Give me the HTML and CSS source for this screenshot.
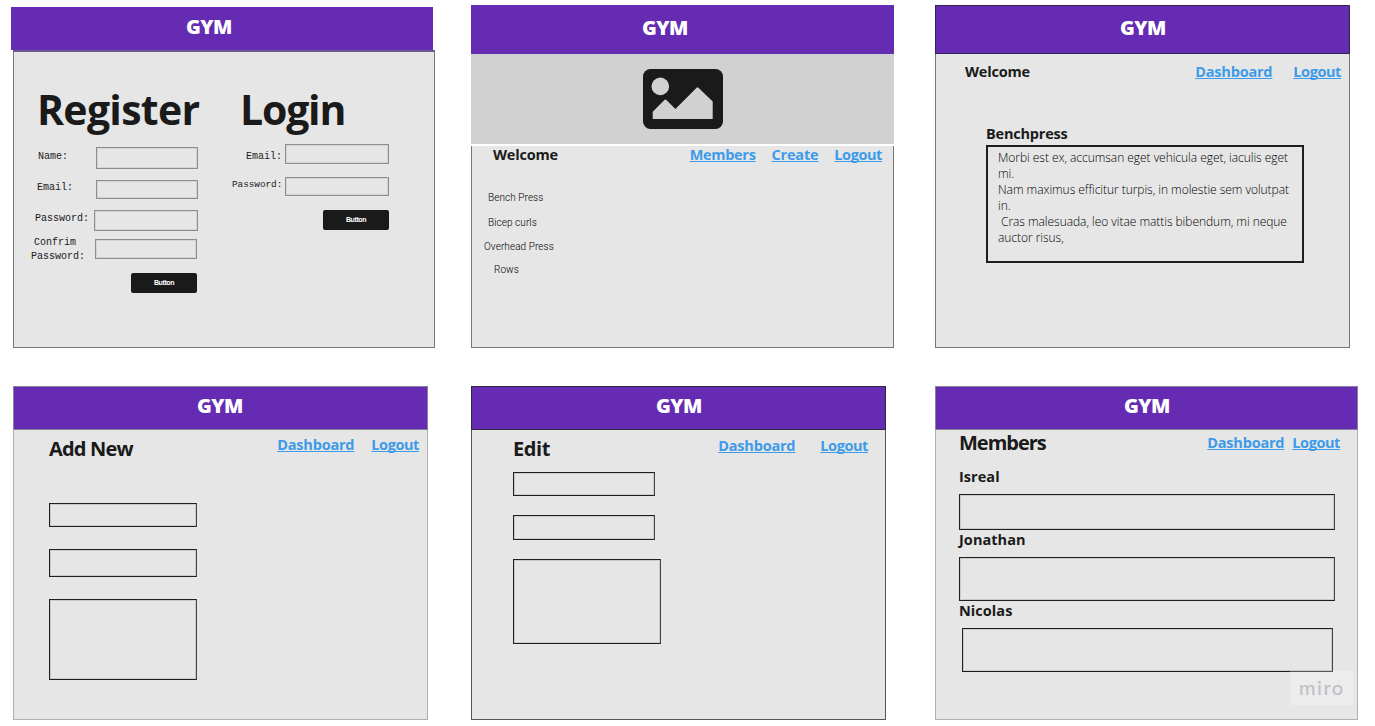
FILE: index.html
```
<!DOCTYPE html>
<html lang="en">
<head>
<meta charset="utf-8">
<title>GYM wireframes</title>
<link rel="stylesheet" href="styles.css">
</head>
<body>
<main class="board">
  <section class="frame frame-auth">
    <header class="bar">GYM</header>
    <div class="screen">
      <form class="signup">
        <h1 class="display display-register"><span>Register</span></h1>
        <div class="field field-name"><label>Name:</label><i class="input"></i></div>
        <div class="field field-email"><label>Email:</label><i class="input"></i></div>
        <div class="field field-pass"><label>Password:</label><i class="input"></i></div>
        <div class="field field-confirm"><label>Confrim<br>Password:</label><i class="input"></i></div>
        <button class="btn" type="button">Button</button>
      </form>
      <form class="login">
        <h1 class="display display-login"><span>Login</span></h1>
        <div class="field field-user"><label>Email:</label><i class="input"></i></div>
        <div class="field field-key"><label class="small">Password:</label><i class="input"></i></div>
        <button class="btn" type="button">Button</button>
      </form>
    </div>
  </section>

  <section class="frame frame-home">
    <header class="bar">GYM</header>
    <div class="hero">
      <svg class="picture" viewBox="0 0 80 60" width="80" height="60">
        <rect width="80" height="60" rx="7.5" fill="#1a1a1a"/>
        <circle cx="17.3" cy="17.4" r="8.8" fill="#d1d1d1"/>
        <path d="M9.7 42.7 21.4 31Q22.4 30 23.4 31L32.4 40 53.4 18.9Q54.5 17.8 55.7 18.9L69.7 32.4V50H9.7Z" fill="#d1d1d1"/>
      </svg>
    </div>
    <div class="screen">
      <nav class="nav"><span class="label">Welcome</span><a class="push members">Members</a><a class="create">Create</a><a class="logout">Logout</a></nav>
      <ul class="lifts">
        <li class="bench">Bench Press</li>
        <li class="curls">Bicep curls</li>
        <li class="overhead">Overhead Press</li>
        <li class="rows">Rows</li>
      </ul>
    </div>
  </section>

  <section class="frame frame-detail">
    <header class="bar">GYM</header>
    <div class="screen">
      <nav class="nav"><span class="label">Welcome</span><a class="push">Dashboard</a><a class="logout">Logout</a></nav>
      <article class="lift">
        <h2 class="label">Benchpress</h2>
        <div class="note">
          <p>Morbi est ex, accumsan eget vehicula eget, iaculis eget</p>
          <p>mi.</p>
          <p>Nam maximus efficitur turpis, in molestie sem volutpat</p>
          <p>in.</p>
          <p class="indent">Cras malesuada, leo vitae mattis bibendum, mi neque</p>
          <p>auctor risus,</p>
        </div>
      </article>
    </div>
  </section>

  <section class="frame frame-add">
    <header class="bar">GYM</header>
    <div class="screen">
      <nav class="nav"><h2 class="title">Add New</h2><a class="push">Dashboard</a><a class="logout">Logout</a></nav>
      <div class="boxes"><i class="box b1"></i><i class="box b2"></i><i class="box b3"></i></div>
    </div>
  </section>

  <section class="frame frame-edit">
    <header class="bar">GYM</header>
    <div class="screen">
      <nav class="nav"><h2 class="title">Edit</h2><a class="push">Dashboard</a><a class="logout">Logout</a></nav>
      <div class="boxes"><i class="box b1"></i><i class="box b2"></i><i class="box b3"></i></div>
    </div>
  </section>

  <section class="frame frame-members">
    <header class="bar">GYM</header>
    <div class="screen">
      <nav class="nav"><h2 class="title">Members</h2><a class="push">Dashboard</a><a class="logout">Logout</a></nav>
      <div class="people">
        <h3 class="label">Isreal</h3><i class="box b1"></i>
        <h3 class="label">Jonathan</h3><i class="box b2"></i>
        <h3 class="label">Nicolas</h3><i class="box b3"></i>
      </div>
      <div class="brand">miro</div>
    </div>
  </section>
</main>
</body>
</html>
```
FILE: styles.css
```
* { box-sizing: border-box; }
body { margin: 0; background: #fff; color: #1a1a1a; font-family: "Open Sans", "Noto Sans", sans-serif; }
h1, h2, h3, p, ul { margin: 0; padding: 0; list-style: none; }
i { display: block; flex: none; }

.board {
  display: grid;
  grid-template-columns: 460px 464px 424px;
  grid-template-rows: 381px 335px;
  padding: 5px 0 0 11px;
  width: 1375px;
  height: 726px;
  overflow: hidden;
}
.frame { display: flex; flex-direction: column; }
.bar {
  flex: none;
  background: #662bb3;
  color: #fff;
  font-size: 20px;
  font-weight: 800;
  letter-spacing: -0.6px;
  white-space: nowrap;
}
.screen { flex: 1; background: #e6e6e6; border: 1px solid #777; border-top: 0; position: relative; }

.nav { display: flex; align-items: flex-start; }
.nav a {
  font-size: 14.5px;
  line-height: 20px;
  font-weight: 700;
  letter-spacing: -0.2px;
  color: #3d9be9;
  text-decoration: underline;
  text-decoration-thickness: 1px;
  text-underline-offset: 1px;
  text-decoration-skip-ink: none;
  white-space: nowrap;
}
.nav .logout { letter-spacing: -0.42px; }
.nav .members { letter-spacing: -0.32px; }
.nav .push { margin-left: auto; }
.label { font-size: 14.5px; line-height: 20px; font-weight: 700; letter-spacing: -0.2px; white-space: nowrap; }
.title { font-size: 20px; line-height: 27px; font-weight: 700; letter-spacing: -0.8px; white-space: nowrap; }
.box { border: 1px solid #1f1f1f; border-right-color: #444; box-shadow: inset 0 0 0 1px rgba(0, 0, 0, 0.12); }

/* Register and login */
.frame-auth { width: 424px; height: 341px; margin-top: 2px; }
.frame-auth .bar { width: 422px; height: 43px; padding-left: 175px; line-height: 40px; }
.frame-auth .screen { margin-left: 2px; display: flex; border-top: 2px solid #6d5590; }
.signup { width: 183px; padding-top: 28px; flex: none; }
.login { margin-left: 35px; width: 157px; padding-top: 28px; flex: none; }
.display { font-size: 41px; line-height: 58px; font-weight: 700; letter-spacing: -0.7px; white-space: nowrap; height: 56px; }
.display-register { padding-left: 23px; }
.display-login { padding-left: 8px; letter-spacing: -1.2px; }
.field { display: flex; align-items: center; }
.field label { flex: none; font-family: "Liberation Mono", monospace; font-size: 10px; line-height: 14px; white-space: nowrap; }
.field .small { font-size: 9.3px; }
.input { border: 1px solid #8d8d8d; height: 100%; box-shadow: inset 0 0 0 1px rgba(0, 0, 0, 0.08); }
.field-name { height: 22px; margin-top: 11px; }
.field-name label { width: 82px; padding: 0 0 2px 24px; }
.field-name .input, .field-email .input { width: 102px; }
.field-email { height: 19px; margin-top: 11px; }
.field-email label { width: 82px; padding: 0 0 3px 23px; }
.field-pass { height: 21px; margin-top: 11px; }
.field-pass label { width: 80px; padding: 0 0 3px 21px; }
.field-pass .input { width: 104px; }
.field-confirm { height: 20px; margin-top: 8px; }
.field-confirm label { width: 81px; padding: 2px 0 0 17px; text-indent: 3px; }
.field-confirm .input { width: 102px; }
.field-user { height: 20px; margin-top: 8px; }
.field-user label { width: 53px; padding: 6px 0 0 14px; }
.field-user .input, .field-key .input { width: 104px; }
.field-key { height: 19px; margin-top: 13px; }
.field-key label { width: 53px; padding-bottom: 3px; }
.btn {
  display: block;
  width: 66px;
  height: 20px;
  margin: 14px 0 0 auto;
  padding: 0;
  border: 0;
  border-radius: 2px;
  background: #1a1a1a;
  color: #fff;
  font: 700 7px/20px "Liberation Sans", sans-serif;
  letter-spacing: -0.4px;
}

/* Home */
.frame-home { width: 423px; height: 343px; }
.frame-home .bar { height: 49px; padding-left: 171px; line-height: 46px; }
.hero { flex: none; height: 92px; padding: 15px 0 0 172px; background: #d1d1d1; border-bottom: 2px solid #fff; }
.picture { display: block; }
.frame-home .nav { padding: 0 11px 0 21px; gap: 16px; }
.frame-home .nav .label, .frame-home .nav a { line-height: 18px; }
.lifts { font: 300 10px/14px Roboto, sans-serif; color: #000; letter-spacing: 0.07px; padding-top: 27px; }
.lifts .bench { padding-left: 16px; }
.lifts .curls { padding-left: 16px; margin-top: 11px; }
.lifts .overhead { padding-left: 12px; margin-top: 10px; }
.lifts .rows { padding-left: 22px; margin-top: 9px; }

/* Exercise detail */
.frame-detail { width: 415px; height: 343px; }
.frame-detail .bar { height: 49px; padding-left: 184px; line-height: 44px; border: 1px solid #35234f; }
.frame-detail .nav { padding: 8px 8px 0 29px; gap: 21px; }
.lift { padding: 42px 0 0 50px; }
.note { width: 318px; height: 118px; margin-top: 1px; padding: 3px 0 0 10px; border: 2px solid #1f1f1f; color: #000; font-size: 12px; line-height: 16px; font-weight: 300; letter-spacing: -0.04px; white-space: nowrap; }
.indent { padding-left: 3px; }

/* Add, edit, members */
.frame-add { width: 415px; height: 334px; margin-left: 2px; }
.frame-add .bar, .frame-edit .bar, .frame-members .bar { height: 44px; line-height: 38px; border: 1px solid #8a7f9c; }
.frame-add .bar { padding-left: 183px; }
.frame-add .screen { border-color: #b0b0b0; }
.frame-add .nav { padding: 5px 8px 0 35px; gap: 17px; }
.boxes { display: flex; flex-direction: column; }
.frame-add .boxes { padding: 41px 0 0 35px; }
.frame-add .box { width: 148px; }
.frame-add .b1 { height: 24px; }
.frame-add .b2 { height: 28px; margin-top: 22px; }
.frame-add .b3 { height: 81px; margin-top: 22px; }

.frame-edit { width: 415px; height: 334px; }
.frame-edit .bar { padding-left: 184px; }
.frame-edit .bar { border-color: #33263f; }
.frame-edit .screen { border-color: #555; }
.frame-edit .nav { padding: 5px 17px 0 41px; gap: 25px; }
.frame-edit .nav a { line-height: 22px; }
.frame-edit .title { letter-spacing: -0.4px; }
.frame-edit .boxes { padding: 10px 0 0 41px; }
.frame-edit .box { width: 142px; }
.frame-edit .b1 { height: 24px; }
.frame-edit .b2 { height: 25px; margin-top: 19px; }
.frame-edit .b3 { width: 148px; height: 85px; margin-top: 19px; }

.frame-members { width: 423px; height: 334px; }
.frame-members .bar { padding-left: 188px; }
.frame-members .screen { border-color: #b0b0b0; }
.frame-members .nav { padding: 0 17px 0 23px; gap: 8px; }
.frame-members .nav a { line-height: 26px; }
.frame-members .title { line-height: 25px; letter-spacing: -1px; }
.people { padding: 11px 0 0 23px; }
.people .label { letter-spacing: 0.05px; }
.people .b1 { width: 376px; height: 36px; margin-top: 7px; }
.people .b2 { width: 376px; height: 44px; margin-top: 7px; }
.people .b3 { width: 371px; height: 44px; margin: 7px 0 0 3px; }
.brand {
  position: absolute;
  right: 4px;
  bottom: 14px;
  width: 63px;
  height: 34px;
  padding-left: 9px;
  background: rgba(255, 255, 255, 0.25);
  color: #c0c0c8;
  font: 500 20px/32px Lato, sans-serif;
  letter-spacing: 1.5px;
}
```
